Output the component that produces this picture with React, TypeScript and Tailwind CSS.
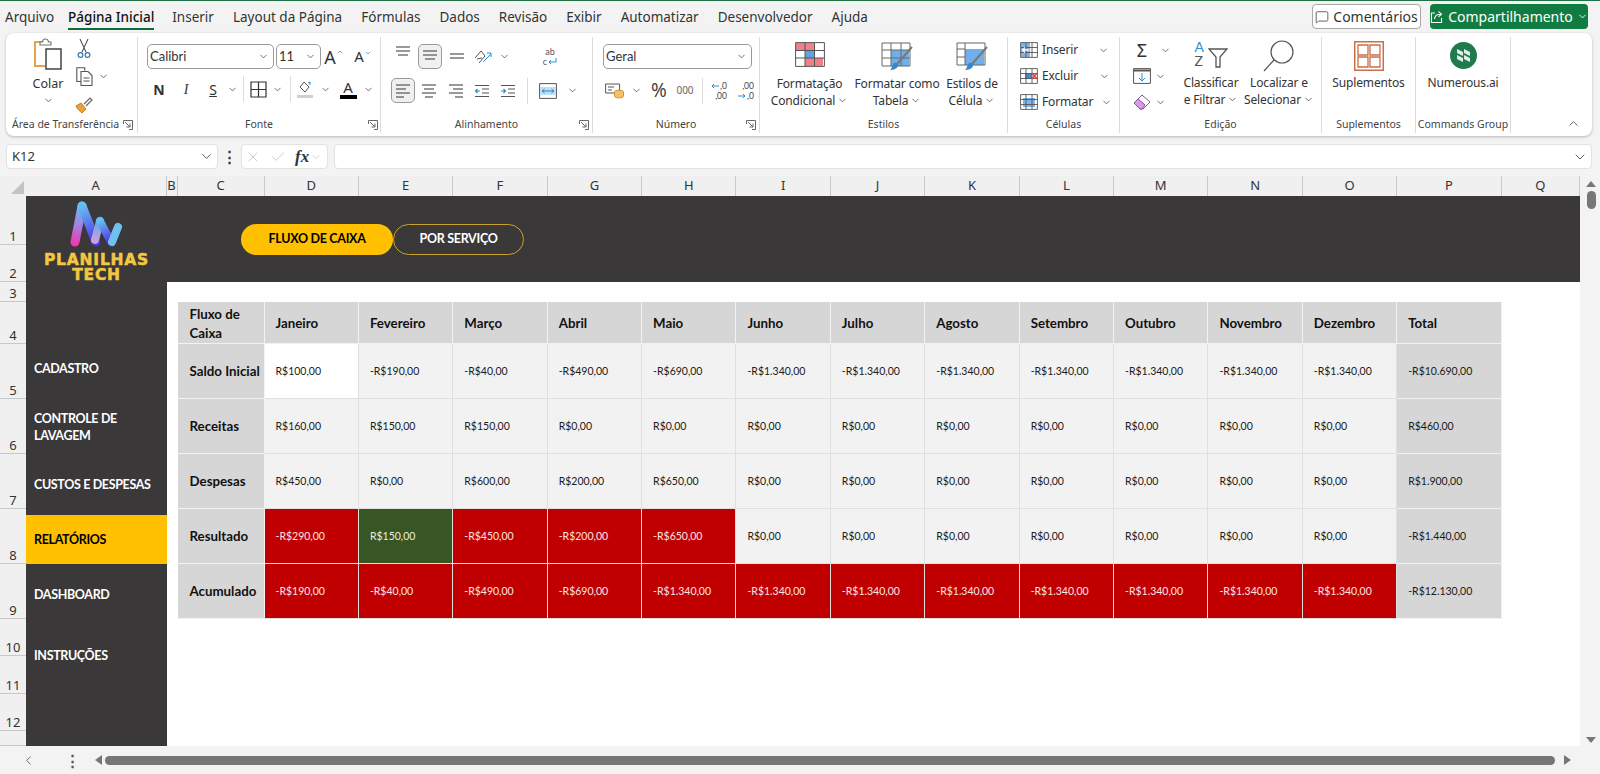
import React from 'react';
import { ChevronDown, ChevronLeft, ChevronUp, Check, X, MessageSquare } from 'lucide-react';

const c = 'flex items-center justify-center shrink-0';
const tabs = ['Inserir', 'Layout da Página', 'Fórmulas', 'Dados', 'Revisão', 'Exibir', 'Automatizar', 'Desenvolvedor', 'Ajuda'];
const columns = ['A', 'B', 'C', 'D', 'E', 'F', 'G', 'H', 'I', 'J', 'K', 'L', 'M', 'N', 'O', 'P', 'Q'];
const rowNumbers = [
  ['1', 'row-start-2'], ['2', 'row-start-3'], ['3', 'row-start-4'], ['4', 'row-start-5'],
  ['5', 'row-start-6'], ['6', 'row-start-7'], ['7', 'row-start-8'], ['8', 'row-start-9'],
  ['9', 'row-start-10'], ['10', 'row-start-11'], ['11', 'row-start-12'], ['12', 'row-start-13'], ['', 'row-start-14'],
];
const months = ['Janeiro', 'Fevereiro', 'Março', 'Abril', 'Maio', 'Junho', 'Julho', 'Agosto', 'Setembro', 'Outubro', 'Novembro', 'Dezembro', 'Total'];

type Tone = 'w' | 'l' | 'r' | 'g';
type Row = { label: string; values: string[]; tones: Tone[]; total: string };

const zeros = (n: number) => Array(n).fill('R$0,00');
const neg = (n: number) => Array(n).fill('-R$1.340,00');
const light = (n: number): Tone[] => Array(n).fill('l');
const red = (n: number): Tone[] => Array(n).fill('r');

const rows: Row[] = [
  { label: 'Saldo Inicial', values: ['R$100,00', '-R$190,00', '-R$40,00', '-R$490,00', '-R$690,00', ...neg(7)], tones: ['w', ...light(11)], total: '-R$10.690,00' },
  { label: 'Receitas', values: ['R$160,00', 'R$150,00', 'R$150,00', ...zeros(9)], tones: light(12), total: 'R$460,00' },
  { label: 'Despesas', values: ['R$450,00', 'R$0,00', 'R$600,00', 'R$200,00', 'R$650,00', ...zeros(7)], tones: light(12), total: 'R$1.900,00' },
  { label: 'Resultado', values: ['-R$290,00', 'R$150,00', '-R$450,00', '-R$200,00', '-R$650,00', ...zeros(7)], tones: ['r', 'g', 'r', 'r', 'r', ...light(7)], total: '-R$1.440,00' },
  { label: 'Acumulado', values: ['-R$190,00', '-R$40,00', '-R$490,00', '-R$690,00', ...neg(8)], tones: red(12), total: '-R$12.130,00' },
];

const toneClass: Record<Tone, string> = {
  w: 'bg-white text-[#1a1a1a]',
  l: 'bg-[#f2f2f2] text-[#1a1a1a]',
  r: 'bg-[#c00000] text-[#fbe4e4]',
  g: 'bg-[#375623] text-[#e6efe0]',
};

function Chev({ className = '' }: { className?: string }) {
  return <ChevronDown size={11} strokeWidth={1.8} className={'text-[#555] shrink-0 ' + className} />;
}

function Launcher() {
  return (
    <svg width="10" height="10" viewBox="0 0 10 10" fill="none" stroke="#666" strokeWidth="1">
      <path d="M.5 4V.5h9v9H6" />
      <path d="M2 2l5 5M7 3.5V7H3.5" />
    </svg>
  );
}

function Group({ width, label, children, launcher, labelClass = 'justify-center' }: { width: string; label: string; children: React.ReactNode; launcher?: string; labelClass?: string }) {
  return (
    <div className={'flex flex-col border-r border-[#dcdcdc] shrink-0 h-[96px] ' + width}>
      <div className="flex-1 flex flex-col min-h-0">{children}</div>
      <div className={'h-[16px] flex items-center text-[10.5px] text-[#444] relative whitespace-nowrap ' + labelClass}>
        {label}
        {launcher && <span className={'absolute top-[3px] ' + launcher}><Launcher /></span>}
      </div>
    </div>
  );
}

function Select({ width, text }: { width: string; text: string }) {
  return (
    <div className={'h-[25px] bg-white border border-[#9a9a9a] rounded-[5px] flex items-center justify-between pl-[2px] pr-[4px] text-[13px] text-[#333] shrink-0 ' + width}>
      <span style={{ fontFamily: 'Lato, sans-serif' }}>{text}</span>
      <Chev />
    </div>
  );
}

function Paste() {
  return (
    <svg width="30" height="32" viewBox="0 0 30 32" fill="none">
      <path d="M9 4H2v24h10" stroke="#e3a34a" strokeWidth="2" />
      <path d="M7 7V4h2.5a3 3 0 016 0H18v3z" stroke="#777" fill="#fff" strokeWidth="1.2" />
      <path d="M13 11h15v20H13z" stroke="#444" strokeWidth="1.5" fill="#fff" />
    </svg>
  );
}

function Scissors() {
  return (
    <svg width="14" height="20" viewBox="0 0 14 20" fill="none" stroke="#555" strokeWidth="1.1">
      <path d="M3 0l6 13M11 0L5 13" />
      <circle cx="3.5" cy="16" r="2.4" stroke="#2d6ea8" />
      <circle cx="10.5" cy="16" r="2.4" stroke="#2d6ea8" />
    </svg>
  );
}

function CopyIcon() {
  return (
    <svg width="17" height="19" viewBox="0 0 17 19" fill="none" stroke="#555" strokeWidth="1.1">
      <path d="M5 14.5H.8V.8h8v3" />
      <path d="M5 4.5h7l4 4v10H5z" fill="#fff" />
      <path d="M7.5 11h6M7.5 14h6" />
    </svg>
  );
}

function Painter() {
  return (
    <svg width="18" height="18" viewBox="0 0 18 18" fill="none">
      <path d="M1 10l5-3 5 6-4 4C5 15 2 13 1 10z" fill="#e9a23b" stroke="#c47f1f" />
      <path d="M9 8l6-6 2 2-6 6" stroke="#666" strokeWidth="1.2" />
    </svg>
  );
}

function Lines({ widths, offsets, color = '#555' }: { widths: number[]; offsets: number[]; color?: string }) {
  return (
    <svg width="16" height="16" viewBox="0 0 16 16" stroke={color} strokeWidth="1.2">
      {widths.map((w, i) => <path key={i} d={'M' + offsets[i] + ' ' + (2 + i * 4) + 'h' + w} />)}
    </svg>
  );
}

function Indent({ flip }: { flip?: boolean }) {
  return (
    <svg width="16" height="14" viewBox="0 0 16 14" fill="none" stroke="#555" strokeWidth="1.1">
      <path d="M1 1.5h14M8 5h7M8 9h7M1 12.5h14" />
      <path d={flip ? 'M1 7h4.5M3.5 5l2 2-2 2' : 'M6 7H1.5M3.5 5l-2 2 2 2'} stroke="#1f8ad0" />
    </svg>
  );
}

function CondFormat() {
  return (
    <svg width="30" height="25" viewBox="0 0 30 25" fill="none">
      <path d="M1 1h18v7H1zM10 16h18v8H10z" fill="#f0808a" />
      <path d="M10 8.5h9V16h-9z" fill="#5ba4e6" />
      <path d="M.6.6h28.8v23.8H.6zM.6 8.5h28.8M.6 16h28.8M10 .6v23.8M19.5.6v23.8" stroke="#555" strokeWidth="1" />
    </svg>
  );
}

function TableBrush({ cell }: { cell?: boolean }) {
  return (
    <svg width="32" height="29" viewBox="0 0 32 29" fill="none">
      <path d={cell ? 'M9 7h19v16H9z' : 'M10 8h18v16H10z'} fill="#6fb0ec" />
      <path d={cell ? 'M1 1h28v22H1zM1 7h8M9 1v22M1 15h8' : 'M1 1h28v23H1zM1 8h28M1 16h28M10 1v23M20 1v23'} stroke="#666" strokeWidth="1" />
      <path d="M31 5L16 22" stroke="#777" strokeWidth="2" />
      <path d="M13 21c3-1 5 1 4 3-1 3-5 4-8 4 2-1 2-5 4-7z" fill="#3a86c8" />
    </svg>
  );
}

function CellIcon({ kind }: { kind: 'in' | 'out' | 'fmt' }) {
  return (
    <svg width="18" height="16" viewBox="0 0 18 16" fill="none">
      {kind === 'in' && <path d="M1 1h9v14H1z" fill="#7eb6ea" />}
      {kind === 'out' && <path d="M5 5h7v6H5z" fill="#3a8fd6" />}
      {kind === 'fmt' && <path d="M3 4h12v9H3z" fill="#7eb6ea" />}
      <path d="M.6.6h16.8v14.8H.6zM.6 5.5h16.8M.6 10.5h16.8M6 .6v14.8M12 .6v14.8" stroke="#555" strokeWidth=".9" />
      {kind === 'in' && <path d="M9 8H3M5 5.5L2.5 8 5 10.5" stroke="#fff" strokeWidth="1.3" />}
      {kind === 'out' && <path d="M12 5l5 6M17 5l-5 6" stroke="#d9432f" strokeWidth="1.4" />}
    </svg>
  );
}

function ShareIcon() {
  return (
    <svg width="14" height="14" viewBox="0 0 14 14" fill="none" stroke="#fff" strokeWidth="1.1">
      <path d="M5 3H1.5v9.5h10V8" />
      <path d="M4.5 9c.3-3 2.5-4.8 6-4.8M8.5 1.500l3 2.700-3 2.700" />
    </svg>
  );
}

// the two decimal buttons: digits stacked, with a small blue arrow drawn beside them
function DecimalIcon({ more }: { more?: boolean }) {
  return (
    <div className={c + ' w-[26px] ml-[1px]'} style={{ fontFamily: 'Lato, sans-serif' }}>
      <div className="flex flex-col items-end text-[8.5px] leading-[10px] text-[#444]">
        <span className="flex items-center gap-[1px]">
          {more ? null : <svg width="8" height="6" viewBox="0 0 8 6" fill="none" stroke="#2b8fd6"><path d="M8 3H1M3 1L1 3l2 2" /></svg>}
          {more ? ',00' : ',0'}
        </span>
        <span className="flex items-center gap-[1px]">
          {more ? <svg width="8" height="6" viewBox="0 0 8 6" fill="none" stroke="#2b8fd6"><path d="M0 3h7M5 1l2 2-2 2" /></svg> : null}
          {more ? ',0' : ',00'}
        </span>
      </div>
    </div>
  );
}

function Logo() {
  return (
    <svg width="56" height="48" viewBox="0 0 56 48">
      <defs>
        <linearGradient id="lh" gradientUnits="userSpaceOnUse" x1="13" y1="6" x2="27" y2="42">
          <stop offset="0" stopColor="#66bdf2" />
          <stop offset="1" stopColor="#4b2fe8" />
        </linearGradient>
        <linearGradient id="lj" gradientUnits="userSpaceOnUse" x1="31" y1="21" x2="42" y2="42">
          <stop offset="0" stopColor="#66bdf2" />
          <stop offset="1" stopColor="#4b2fe8" />
        </linearGradient>
        <linearGradient id="lk" gradientUnits="userSpaceOnUse" x1="6" y1="42" x2="13" y2="6">
          <stop offset="0" stopColor="#ea3fb4" />
          <stop offset="0.45" stopColor="#a67fe0" />
          <stop offset="1" stopColor="#66bdf2" />
        </linearGradient>
        <linearGradient id="li" gradientUnits="userSpaceOnUse" x1="26" y1="40" x2="31" y2="21">
          <stop offset="0" stopColor="#c9a0dc" />
          <stop offset="1" stopColor="#5aa8ee" />
        </linearGradient>
      </defs>
      <path d="M6 42L13 6" stroke="url(#lk)" strokeWidth="9" strokeLinecap="round" />
      <path d="M13 6l14 36" stroke="url(#lh)" strokeWidth="9" strokeLinecap="round" />
      <path d="M26 40l5-19" stroke="url(#li)" strokeWidth="8" strokeLinecap="round" />
      <path d="M31 21l11 21" stroke="url(#lj)" strokeWidth="8" strokeLinecap="round" />
      <path d="M43 42l6-15" stroke="#6fc0f0" strokeWidth="8" strokeLinecap="round" />
    </svg>
  );
}

function Ribbon() {
  return (
    <div className="ml-[6px] w-[1586px] h-[103px] shrink-0 bg-white rounded-[8px] shadow-[0_1px_3px_rgba(0,0,0,0.25)] pt-[4px] flex text-[#333]">
      <Group width="w-[132px]" label="Área de Transferência" launcher="right-[4px]" labelClass="pl-[6px] justify-start">
        <div className="flex pt-[1px]">
          <div className="w-[52px] ml-[16px] flex flex-col items-center shrink-0">
            <Paste />
            <span className="text-[12.5px] mt-[5px] leading-[18px]">Colar</span>
            <Chev className="mt-[2px]" />
          </div>
          <div className="flex flex-col gap-[9px] pt-[1px]">
            <div className={c + ' w-[20px] h-[19px]'}><Scissors /></div>
            <div className="flex items-center h-[19px]"><div className={c + ' w-[20px]'}><CopyIcon /></div><Chev className="ml-[4px]" /></div>
            <div className={c + ' w-[20px] h-[19px]'}><Painter /></div>
          </div>
        </div>
      </Group>

      <Group width="w-[243px]" label="Fonte" launcher="right-[2px]">
        <div className="flex items-center pt-[7px] pl-[9px]">
          <Select width="w-[127px]" text="Calibri" />
          <Select width="w-[45px] ml-[2px]" text="11" />
          <div className={c + ' w-[26px] text-[18px] leading-none'}>A<ChevronUp size={8} strokeWidth={2} className="text-[#2b7cd3] self-start" /></div>
          <div className={c + ' w-[26px] ml-[3px] text-[15px] leading-none'}>A<ChevronDown size={8} strokeWidth={2} className="text-[#2b7cd3] self-start" /></div>
        </div>
        <div className="flex items-center pl-[9px] mt-[8px] h-[24px]">
          <div className={c + ' w-[24px] font-bold text-[14px]'}>N</div>
          <div className={c + ' w-[30px] italic text-[14px]'} style={{ fontFamily: 'Liberation Serif, serif' }}>I</div>
          <div className={c + ' w-[24px] underline text-[14px]'}>S</div>
          <div className={c + ' w-[14px]'}><Chev /></div>
          <div className={c + ' w-[8px]'}><div className="w-px h-[26px] bg-[#dcdcdc]" /></div>
          <div className={c + ' w-[22px]'}>
            <svg width="17" height="17" viewBox="0 0 17 17" fill="none" stroke="#333" strokeWidth="1.2"><path d="M1 1h15v15H1zM8.5 1v15M1 8.5h15" /></svg>
          </div>
          <div className={c + ' w-[16px]'}><Chev /></div>
          <div className={c + ' w-[10px]'}><div className="w-px h-[26px] bg-[#dcdcdc]" /></div>
          <div className={c + ' w-[20px]'}>
            <svg width="18" height="18" viewBox="0 0 18 18" fill="none"><path d="M4 7l4-5 5 5-4 5z" stroke="#555" /><path d="M12 3l2-1v3" stroke="#2b7cd3" /><path d="M1 15h16v3H1z" fill="#cfcfcf" /></svg>
          </div>
          <div className={c + ' w-[20px]'}><Chev /></div>
          <div className={c + ' w-[26px] flex-col text-[15px] leading-[15px]'}>A<div className="w-[17px] h-[4px] bg-black" /></div>
          <div className={c + ' w-[14px]'}><Chev /></div>
        </div>
      </Group>

      <Group width="w-[212px]" label="Alinhamento" launcher="right-[3px]">
        <div className="flex items-center pt-[7px] pl-[10px] h-[32px]">
          <div className={c + ' w-[24px] h-[25px] pb-[7px]'}><Lines widths={[14, 14, 10]} offsets={[1, 1, 3]} /></div>
          <div className={c + ' w-[24px] h-[25px] ml-[3px] bg-[#f0f0f0] border border-[#9a9a9a] rounded-[5px]'}><Lines widths={[14, 14, 10]} offsets={[1, 1, 3]} /></div>
          <div className={c + ' w-[24px] h-[25px] ml-[3px] pt-[7px]'}><Lines widths={[14, 14]} offsets={[1, 1]} /></div>
          <div className={c + ' w-[22px] ml-[3px]'}>
            <svg width="20" height="18" viewBox="0 0 20 18" fill="none"><path d="M2 10l6-7 4 5-6 7M4 11l5-1" stroke="#555" /><path d="M10 14l8-8M14 5h4v4" stroke="#2b8fd6" /></svg>
          </div>
          <div className={c + ' w-[14px] ml-[3px]'}><Chev /></div>
          <div className={c + ' w-[22px] ml-[28px] flex-col text-[9px] leading-[10px] text-[#555]'} style={{ fontFamily: 'Lato, sans-serif' }}>
            <span>ab</span>
            <span className="flex items-center gap-[1px]">c<svg width="9" height="8" viewBox="0 0 9 8" fill="none" stroke="#2b8fd6"><path d="M8 0v4H1M3 2L1 4l2 2" /></svg></span>
          </div>
        </div>
        <div className="flex items-center mt-[9px] pl-[10px] h-[25px]">
          <div className={c + ' w-[24px] h-[25px] bg-[#f0f0f0] border border-[#9a9a9a] rounded-[5px]'}><Lines widths={[14, 10, 14, 8]} offsets={[1, 1, 1, 1]} /></div>
          <div className={c + ' w-[26px] ml-[1px]'}><Lines widths={[14, 10, 14, 8]} offsets={[1, 3, 1, 4]} /></div>
          <div className={c + ' w-[26px] ml-[1px]'}><Lines widths={[14, 10, 14, 8]} offsets={[1, 5, 1, 7]} /></div>
          <div className={c + ' w-[26px]'}><Indent /></div>
          <div className={c + ' w-[26px]'}><Indent flip /></div>
          <div className={c + ' w-[10px] ml-[1px]'}><div className="w-px h-[26px] bg-[#dcdcdc]" /></div>
          <div className={c + ' w-[22px] ml-[5px]'}>
            <svg width="18" height="16" viewBox="0 0 18 16" fill="none"><path d="M.6.6h16.8v14.8H.6z" stroke="#555" /><path d="M1 4h16v8H1z" fill="#bfe0f5" /><path d="M3 8h12M5.5 6L3 8l2.5 2M12.5 6L15 8l-2.5 2" stroke="#1f8ad0" /></svg>
          </div>
          <div className={c + ' w-[14px] ml-[6px]'}><Chev /></div>
        </div>
      </Group>

      <Group width="w-[167px]" label="Número" launcher="right-[3px]">
        <div className="pt-[7px] pl-[10px]"><Select width="w-[149px]" text="Geral" /></div>
        <div className="flex items-center mt-[9px] pl-[11px] h-[25px]">
          <div className={c + ' w-[22px]'}>
            <svg width="20" height="18" viewBox="0 0 20 18" fill="none"><path d="M.6 2h14v9H.6z" stroke="#555" /><path d="M3 5h6M3 8h4" stroke="#555" /><ellipse cx="14" cy="10" rx="4.5" ry="1.8" fill="#f4c16e" stroke="#d9922e" /><path d="M9.5 10v4c0 2.5 9 2.5 9 0v-4" fill="#f4c16e" stroke="#d9922e" /></svg>
          </div>
          <div className={c + ' w-[14px] ml-[3px]'}><Chev /></div>
          <div className={c + ' w-[24px] ml-[4px] text-[19px] leading-none text-[#444]'}>%</div>
          <div className={c + ' w-[26px] ml-[1px] text-[10px] text-[#666]'}>000</div>
          <div className={c + ' w-[6px] ml-[1px]'}><div className="w-px h-[26px] bg-[#dcdcdc]" /></div>
          <DecimalIcon />
          <DecimalIcon more />
        </div>
      </Group>

      <Group width="w-[248px]" label="Estilos">
        <div className="flex pt-[5px] text-[12px] tracking-[-0.15px] leading-[17px] text-center">
          <div className="w-[87px] ml-[6px] flex flex-col items-center shrink-0">
            <div className="h-[32px]"><CondFormat /></div>
            <span className="mt-[1px]">Formatação</span>
            <span className="flex items-center gap-[2px] whitespace-nowrap">Condicional <Chev /></span>
          </div>
          <div className="w-[88px] flex flex-col items-center shrink-0">
            <div className="h-[32px]"><TableBrush /></div>
            <span className="mt-[1px] whitespace-nowrap">Formatar como</span>
            <span className="flex items-center gap-[2px]">Tabela <Chev /></span>
          </div>
          <div className="w-[62px] flex flex-col items-center shrink-0">
            <div className="h-[32px]"><TableBrush cell /></div>
            <span className="mt-[1px] whitespace-nowrap">Estilos de</span>
            <span className="flex items-center gap-[2px]">Célula <Chev /></span>
          </div>
        </div>
      </Group>

      <Group width="w-[112px]" label="Células">
        <div className="flex flex-col pl-[12px] text-[12px] tracking-[-0.15px]">
          {[['in', 'Inserir', 'ml-[16px]'], ['out', 'Excluir', 'ml-[17px]'], ['fmt', 'Formatar', 'ml-[4px]']].map(([k, t, m]) => (
            <div key={t} className="h-[26px] flex items-center gap-[4px]">
              <CellIcon kind={k as 'in' | 'out' | 'fmt'} />
              <span>{t}</span>
              <Chev className={m} />
            </div>
          ))}
        </div>
      </Group>

      <Group width="w-[202px]" label="Edição">
        <div className="flex">
          <div className="flex flex-col w-[50px] pl-[12px] shrink-0">
            <div className="h-[26px] flex items-center"><span className="w-[20px] shrink-0 text-center text-[18px] leading-none">Σ</span><Chev className="ml-[8px]" /></div>
            <div className="h-[26px] flex items-center">
              <div className={c + ' w-[20px]'}><svg width="18" height="16" viewBox="0 0 18 16" fill="none"><path d="M.6.6h16.8v14.8H.6z" stroke="#555" /><path d="M.6 2.5h16.8" stroke="#555" strokeWidth="2" /><path d="M9 5v8M6 10l3 3 3-3" stroke="#2b8fd6" /></svg></div>
              <Chev className="ml-[3px]" />
            </div>
            <div className="h-[26px] flex items-center">
              <div className={c + ' w-[20px]'}><svg width="18" height="16" viewBox="0 0 18 16" fill="none"><path d="M1 9l8-8 8 7-7 7H7z" fill="#fff" stroke="#8d4fa8" /><path d="M1 9l4-4 7 6-3 4H7z" fill="#d99be6" stroke="#8d4fa8" /></svg></div>
              <Chev className="ml-[3px]" />
            </div>
          </div>
          <div className="w-[66px] ml-[8px] flex flex-col items-center shrink-0 text-[12px] tracking-[-0.15px] leading-[17px] pt-[3px]">
            <div className="h-[34px] flex items-start">
              <div className="flex flex-col text-[14px] leading-[14px] w-[13px]" style={{ fontFamily: 'Lato, sans-serif' }}><span className="text-[#2b8fd6]">A</span><span className="text-[#555]">Z</span></div>
              <svg width="20" height="20" viewBox="0 0 20 20" fill="none" className="mt-[8px]"><path d="M1 1h18l-7 8v10H8V9z" stroke="#555" strokeWidth="1.3" /></svg>
            </div>
            <span className="whitespace-nowrap">Classificar</span>
            <span className="flex items-center gap-[2px] whitespace-nowrap">e Filtrar <Chev /></span>
          </div>
          <div className="w-[70px] flex flex-col items-center shrink-0 text-[12px] tracking-[-0.15px] leading-[17px] pt-[3px]">
            <div className="h-[34px]">
              <svg width="32" height="32" viewBox="0 0 32 32" fill="none" stroke="#555" strokeWidth="1.2"><circle cx="19" cy="12" r="11" /><path d="M11 20L1 31" /></svg>
            </div>
            <span className="whitespace-nowrap">Localizar e</span>
            <span className="flex items-center gap-[2px] whitespace-nowrap">Selecionar <Chev /></span>
          </div>
        </div>
      </Group>

      <Group width="w-[94px]" label="Suplementos">
        <div className="flex flex-col items-center pt-[4px] text-[12px] tracking-[-0.15px] leading-[17px]">
          <div className="h-[33px]">
            <svg width="30" height="30" viewBox="0 0 30 30" fill="none" stroke="#c96f4a" strokeWidth="1.3"><path d="M.7.7h28.6v28.6H.7z" strokeWidth="1.6" /><path d="M4 4h10v10H4zM16 4h10v10H16zM4 16h10v10H4zM16 16h10v10H16z" /></svg>
          </div>
          <span>Suplementos</span>
        </div>
      </Group>

      <Group width="w-[95px]" label="Commands Group">
        <div className="flex flex-col items-center pt-[5px] text-[12px] tracking-[-0.15px] leading-[17px]">
          <div className="h-[32px]">
            <svg width="27" height="27" viewBox="0 0 27 27"><circle cx="13.5" cy="13.5" r="13.5" fill="#1f7a4d" /><path d="M7 7l6 3v4L7 11zM14 7l6 3v4l-6-3zM7 13l6 3v4l-6-3zM14 13l6 3v4l-6-3z" fill="#dfeee6" /></svg>
          </div>
          <span>Numerous.ai</span>
        </div>
      </Group>

      <div className="flex-1 flex justify-end items-end pr-[11px] pb-[4px]">
        <ChevronUp size={15} strokeWidth={1.5} className="text-[#555] mb-[1px]" />
      </div>
    </div>
  );
}

function CashTable() {
  const cell = 'flex items-center border-r border-b border-[#dfdfdf] pt-[2px] ';
  const head = 'bg-[#d6d6d6] font-bold text-[13.3px] text-[#111] border-r border-b border-[#f2f2f2] flex items-center pt-[2px] ';
  return (
    <div className="col-[4/18] row-[5/11] grid grid-cols-[87px_repeat(12,1fr)_104.5px] grid-rows-[42px_55px_55px_55px_55px_55px]" style={{ fontFamily: 'Lato, sans-serif' }}>
      <div className={head + 'pl-[12px] leading-[19px]'}><span>Fluxo de<br />Caixa</span></div>
      {months.map((m) => (
        <div key={m} className={head + 'pl-[11px]'}>{m}</div>
      ))}
      {rows.map((r) => (
        <React.Fragment key={r.label}>
          <div className={head + 'pl-[12px] whitespace-nowrap'}>{r.label}</div>
          {r.values.map((v, i) => (
            <div key={i} className={cell + 'pl-[11px] text-[10.5px] ' + toneClass[r.tones[i]]}>{v}</div>
          ))}
          <div className="flex items-center pl-[11px] pt-[2px] text-[10.5px] text-[#1a1a1a] bg-[#d6d6d6] border-b border-r border-[#f2f2f2]">{r.total}</div>
        </React.Fragment>
      ))}
    </div>
  );
}

function Sheet() {
  return (
    <div className="w-[1580px] h-[570px] bg-white grid grid-cols-[26px_140.5px_11px_87px_repeat(12,94.4px)_104.5px_1fr] grid-rows-[20px_49px_37px_20px_42px_55px_55px_55px_55px_55px_37px_38px_37px_15px] shrink-0">
      <div className="col-start-1 row-start-1 bg-[#f0f0f0] flex items-end justify-end p-[2px]">
        <div className="w-0 h-0 border-l-[13px] border-l-transparent border-b-[13px] border-b-[#c3c3c3]" />
      </div>
      {columns.map((l) => (
        <div key={l} className="row-start-1 bg-[#f0f0f0] border-r border-[#c8c8c8] flex items-center justify-center text-[13px] text-[#333]">{l}</div>
      ))}
      {rowNumbers.map(([n, row]) => (
        <div key={row} className={'col-start-1 bg-[#f0f0f0] border-b border-[#c8c8c8] flex items-end justify-center text-[13px] leading-[15px] text-[#333] ' + row}>{n}</div>
      ))}

      <div className="col-[2/19] row-[2/4] bg-[#3a3838] flex items-center" style={{ fontFamily: 'Lato, sans-serif' }}>
        <div className="w-[215px] flex flex-col shrink-0 self-start pt-[4px]">
          <div className="w-[123px] ml-[9px] flex flex-col items-center">
            <Logo />
            <div className="mt-[5px] text-[#f2c842] font-bold text-[15.5px] leading-[14.5px] tracking-[0.8px] text-center [-webkit-text-stroke:0.5px_#f2c842]" style={{ fontFamily: 'DejaVu Sans, sans-serif' }}>PLANILHAS<br />TECH</div>
          </div>
        </div>
        <div className="w-[152px] h-[31px] mt-[1px] rounded-full bg-[#ffc000] text-black font-bold text-[12.5px] tracking-[-0.3px] flex items-center justify-center">FLUXO DE CAIXA</div>
        <div className="w-[131px] h-[31px] mt-[1px] rounded-full border border-[#c9a227] text-white font-bold text-[12.5px] tracking-[-0.3px] flex items-center justify-center">POR SERVIÇO</div>
      </div>

      <div className="col-[2/3] row-[4/15] bg-[#3a3838] flex flex-col pt-[61px] text-white font-bold text-[12.5px] tracking-[-0.35px] leading-[17px]" style={{ fontFamily: 'Lato, sans-serif' }}>
        <div className="h-[50px] flex items-center pl-[8px]">CADASTRO</div>
        <div className="h-[68px] flex items-center pl-[8px]"><span>CONTROLE DE<br />LAVAGEM</span></div>
        <div className="h-[46px] flex items-center pl-[8px]">CUSTOS E DESPESAS</div>
        <div className="h-[49px] mt-[8px] flex items-center pl-[8px] bg-[#ffc000] text-black">RELATÓRIOS</div>
        <div className="h-[61px] flex items-center pl-[8px]">DASHBOARD</div>
        <div className="h-[60px] flex items-center pl-[8px]">INSTRUÇÕES</div>
      </div>

      <CashTable />
    </div>
  );
}

export default function App() {
  return (
    <div className="w-[1600px] h-[774px] overflow-hidden bg-[#f3f3f3] flex flex-col border-t border-[#217346]" style={{ fontFamily: '"Noto Sans", sans-serif' }}>
      <div className="h-[32px] shrink-0 flex items-start text-[13.5px] text-[#333]">
        <div className="flex pl-[5px] pt-[6px] gap-[19px] leading-[21px]">
          <span>Arquivo</span>
          <span className="font-medium text-[#111] border-b-[2px] border-[#0e6b3a] h-[23px] -ml-[5px] -mr-[1px]">Página Inicial</span>
          {tabs.map((t) => <span key={t}>{t}</span>)}
        </div>
        <div className="ml-auto flex gap-[9px] pt-[3px] pr-[12px]">
          <div className="w-[109px] h-[25px] bg-white border border-[#a8a8a8] rounded-[4px] flex items-center justify-center gap-[4px] text-[14px]">
            <MessageSquare size={14} strokeWidth={1.3} />Comentários
          </div>
          <div className="w-[158px] h-[25px] bg-[#107c41] rounded-[4px] flex items-center justify-center gap-[4px] text-white text-[14px]">
            <ShareIcon />Compartilhamento<ChevronDown size={11} />
          </div>
        </div>
      </div>

      <Ribbon />

      <div className="flex mt-[8px] ml-[6px] h-[25px] shrink-0 text-[#333]">
        <div className="w-[212px] bg-white rounded-[4px] border border-[#e2e2e2] flex items-center justify-between pl-[5px] pr-[3px] text-[13px]">
          K12<ChevronDown size={15} strokeWidth={1.3} />
        </div>
        <div className="w-[23px] flex items-center justify-center font-bold text-[15px] leading-none">⋮</div>
        <div className="w-[87px] bg-white rounded-[4px] border border-[#e2e2e2] flex items-center pl-[3px] gap-[9px] text-[#bbb]">
          <X size={16} strokeWidth={1.2} /><Check size={16} strokeWidth={1.2} />
          <div className="flex items-center gap-[1px]">
            <span className="italic text-[#333] text-[17px] font-bold" style={{ fontFamily: 'Liberation Serif, serif' }}>fx</span>
            <ChevronDown size={12} strokeWidth={1.2} />
          </div>
        </div>
        <div className="w-[1258px] ml-[6px] bg-white rounded-[4px] border border-[#e2e2e2] flex items-center justify-end pr-[3px]">
          <ChevronDown size={16} strokeWidth={1.2} />
        </div>
      </div>

      <div className="flex mt-[7px] shrink-0">
        <Sheet />
        <div className="w-[20px] flex flex-col items-center justify-between pt-[5px] pb-[3px]">
          <div className="flex flex-col items-center gap-[4px] pl-[2px]">
            <div className="w-0 h-0 border-x-[5px] border-x-transparent border-b-[6px] border-b-[#777]" />
            <div className="w-[9px] h-[18px] rounded-full bg-[#777]" />
          </div>
          <div className="w-0 h-0 ml-[2px] border-x-[5px] border-x-transparent border-t-[6px] border-t-[#777]" />
        </div>
      </div>

      <div className="flex-1 flex items-center pl-[21px] text-[#555]">
        <ChevronLeft size={15} strokeWidth={1.3} />
        <div className="w-[32px] ml-[20px] text-center font-bold text-[15px] leading-none">⋮</div>
        <div className="w-0 h-0 ml-[7px] border-y-[5px] border-y-transparent border-r-[7px] border-r-[#777]" />
        <div className="w-[1450px] h-[9px] ml-[3px] rounded-full bg-[#767676]" />
        <div className="w-0 h-0 ml-[9px] border-y-[5px] border-y-transparent border-l-[7px] border-l-[#777]" />
      </div>
    </div>
  );
}
